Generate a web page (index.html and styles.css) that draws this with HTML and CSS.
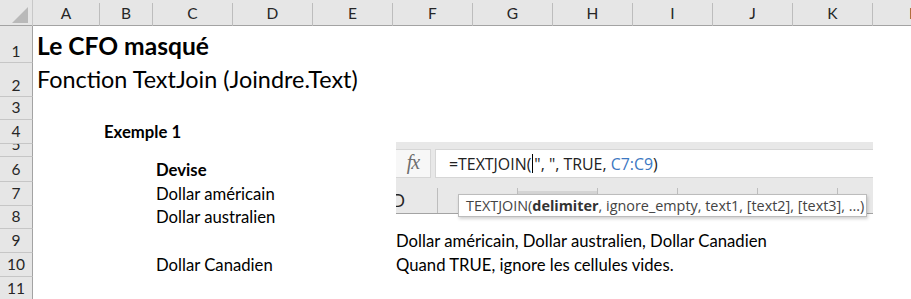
FILE: index.html
```html
<!DOCTYPE html>
<html lang="fr">
<head>
<meta charset="utf-8">
<title>Le CFO masqué</title>
<link rel="stylesheet" href="styles.css">
</head>
<body>
<div class="sheet">
  <div class="corner"><svg class="corner-tri" width="16" height="16" viewBox="0 0 16 16"><polygon points="16,0 16,16 0,16" fill="#b9b9b9"/></svg></div>
  <div class="ch">A</div>
  <div class="ch">B</div>
  <div class="ch">C</div>
  <div class="ch">D</div>
  <div class="ch">E</div>
  <div class="ch">F</div>
  <div class="ch">G</div>
  <div class="ch">H</div>
  <div class="ch">I</div>
  <div class="ch">J</div>
  <div class="ch">K</div>
  <div class="ch ch-l">L</div>

  <div class="rh tall">1</div>
  <div class="rh tall">2</div>
  <div class="rh">3</div>
  <div class="rh">4</div>
  <div class="rh">5</div>
  <div class="rh">6</div>
  <div class="rh">7</div>
  <div class="rh">8</div>
  <div class="rh">9</div>
  <div class="rh">10</div>
  <div class="rh">11</div>

  <div class="cell title a1">Le CFO masqué</div>
  <div class="cell subtitle a2">Fonction TextJoin (Joindre.Text)</div>
  <div class="cell bold b4">Exemple 1</div>
  <div class="cell bold c6">Devise</div>
  <div class="cell c7">Dollar américain</div>
  <div class="cell c8">Dollar australien</div>
  <div class="cell f9">Dollar américain, Dollar australien, Dollar Canadien</div>
  <div class="cell c10">Dollar Canadien</div>
  <div class="cell f10">Quand TRUE, ignore les cellules vides.</div>

  <div class="fbar">
    <div class="fbar-top">
      <div class="fx-box"><span class="fx">fx</span></div>
      <div class="formula">=TEXTJOIN(<span class="caret"></span>", ", TRUE, <span class="ref">C7:C9</span>)</div>
    </div>
    <div class="fbar-cols">
      <div class="mini-col mini-d"><span class="mini-d-letter">D</span></div>
      <div class="mini-col"></div>
      <div class="mini-col mini-sel"></div>
      <div class="mini-col"></div>
      <div class="mini-col"></div>
      <div class="mini-col"></div>
    </div>
  </div>
  <div class="tip">TEXTJOIN(<b>delimiter</b>, ignore_empty, text1, [text2], [text3], ...)</div>
</div>
</body>
</html>
```
FILE: styles.css
```css
html, body {
  margin: 0;
  padding: 0;
  background: #ffffff;
}

.sheet {
  position: relative;
  display: grid;
  grid-template-columns: 33px 67px 53px repeat(10, 80px);
  grid-template-rows: 26px 37px 34px 23px 24px 13px 25px 24px 23px 24px 24px 24px;
  width: 911px;
  height: 299px;
  overflow: hidden;
  font-family: Lato, "Liberation Sans", sans-serif;
  color: #000;
}

.corner {
  background: #e6e6e6;
  box-shadow: inset 0 -1px 0 #a3a3a3;
  border-right: 1px solid #c8c8c8;
  box-sizing: border-box;
  display: flex;
  align-items: flex-end;
  justify-content: flex-end;
  padding: 0 4px 3px 0;
}

.corner-tri {
  display: block;
}

.ch {
  background: #e6e6e6;
  box-sizing: border-box;
  border-right: 1px solid #c4c4c4;
  border-image: linear-gradient(to bottom, #e6e6e6 0, #e6e6e6 3px, #bdbdbd 3px, #bdbdbd 100%) 1;
  border-image-slice: 0 1 0 0;
  box-shadow: inset 0 -1px 0 #a3a3a3;
  display: flex;
  align-items: flex-end;
  justify-content: center;
  font-size: 15.5px;
  line-height: 1.2;
  padding-bottom: 3px;
  color: #262626;
}

.ch-l {
  justify-content: flex-start;
  padding-left: 36px;
}

.rh {
  grid-column: 1;
  background: #e6e6e6;
  box-sizing: border-box;
  border-right: 1px solid #a3a3a3;
  border-bottom: 1px solid #c6c6c6;
  display: flex;
  align-items: flex-end;
  justify-content: center;
  overflow: hidden;
  font-size: 15.5px;
  line-height: 1.2;
  padding-bottom: 2px;
  color: #262626;
}

.rh.tall {
  padding-bottom: 1px;
}

.cell {
  display: flex;
  align-items: flex-end;
  white-space: nowrap;
  overflow: visible;
  font-size: 16.7px;
  line-height: 1.2;
  padding: 0 0 2px 3px;
  min-width: 0;
}

.bold {
  font-weight: 700;
}

.title {
  font-size: 24.6px;
  font-weight: 700;
  padding-left: 4px;
  padding-bottom: 3px;
}

.subtitle {
  font-size: 23.4px;
  padding-left: 4px;
  padding-bottom: 4px;
}

.a1 { grid-column: 2; grid-row: 2; }
.a2 { grid-column: 2; grid-row: 3; }
.b4 { grid-column: 3; grid-row: 5; padding-left: 4px; }
.c6 { grid-column: 4; grid-row: 7; }
.c7 { grid-column: 4; grid-row: 8; }
.c8 { grid-column: 4; grid-row: 9; }
.f9 { grid-column: 7; grid-row: 10; }
.c10 { grid-column: 4; grid-row: 11; }
.f10 { grid-column: 7; grid-row: 11; }

/* Formula bar overlay (pasted screenshot) */
.fbar {
  position: absolute;
  left: 396px;
  top: 142px;
  width: 477px;
  height: 72px;
  background: #e8e8e8;
  box-sizing: border-box;
  border-bottom: 1px solid #a3a3a3;
  display: flex;
  flex-direction: column;
}

.fbar-top {
  display: flex;
  gap: 4px;
  padding-top: 7px;
  height: 29px;
}

.fx-box {
  width: 35px;
  height: 29px;
  box-sizing: border-box;
  background: #f7f7f7;
  border: 1px solid #d6d6d6;
  border-left: none;
  display: flex;
  align-items: center;
  justify-content: center;
}

.fx {
  font-family: "Liberation Serif", "DejaVu Serif", serif;
  font-style: italic;
  font-size: 20px;
  color: #6e6e6e;
  letter-spacing: -1px;
  margin-top: -2px;
}

.formula {
  flex: 1;
  height: 29px;
  box-sizing: border-box;
  background: #ffffff;
  border: 1px solid #d6d6d6;
  border-right: none;
  display: flex;
  align-items: center;
  padding-left: 13px;
  font-family: "Open Sans", "Noto Sans", sans-serif;
  font-size: 15.9px;
  color: #222;
  white-space: pre;
}

.caret {
  display: inline-block;
  width: 1px;
  height: 19px;
  background: #000;
  margin: 0 1px 0 1px;
}

.ref {
  color: #3c78c2;
}

.fbar-cols {
  display: flex;
  margin-top: 7px;
  flex: 1;
}

.mini-col {
  width: 80px;
  flex: none;
  box-sizing: border-box;
  border-right: 1px solid #bdbdbd;
  border-image: linear-gradient(to bottom, #e8e8e8 0, #e8e8e8 3px, #bdbdbd 3px, #bdbdbd 100%) 1;
  border-image-slice: 0 1 0 0;
}

.mini-d {
  width: 42px;
  font-family: Lato, sans-serif;
  font-size: 17px;
  color: #262626;
  display: flex;
  align-items: center;
  overflow: hidden;
  padding-top: 2px;
}

.mini-d-letter {
  margin-left: -4px;
}

.mini-sel {
  background: linear-gradient(to bottom, #e8e8e8 0, #e8e8e8 6px, #d4d4d4 6px, #d4d4d4 100%);
}

.tip {
  position: absolute;
  left: 458px;
  top: 194px;
  width: 409px;
  height: 23px;
  box-sizing: border-box;
  background: #ffffff;
  border: 1px solid #bcbcbc;
  box-shadow: 1px 2px 3px rgba(0, 0, 0, 0.18);
  font-family: "Open Sans", "Noto Sans", sans-serif;
  font-size: 14.4px;
  color: #444;
  padding-left: 7px;
  display: flex;
  align-items: center;
  white-space: pre;
}

.tip b {
  color: #333;
  font-weight: 700;
}
```
